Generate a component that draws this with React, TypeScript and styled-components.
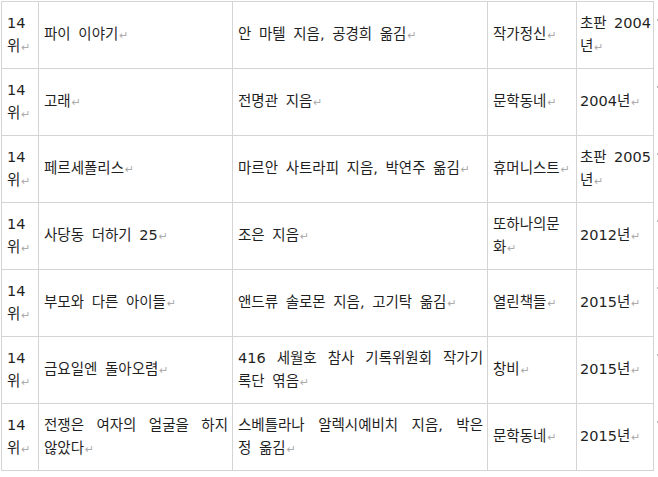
import React from "react";
import styled, { createGlobalStyle } from "styled-components";

const GlobalStyle = createGlobalStyle`
  html, body {
    margin: 0;
    padding: 0;
    background: #ffffff;
  }
  body {
    font-family: "DejaVu Sans", "Noto Sans CJK KR", sans-serif;
    color: #1f1f1f;
  }
`;

const Page = styled.div`
  width: 658px;
  height: 477px;
  overflow: hidden;
  box-sizing: border-box;
  padding: 1px 0 0 1px;
`;

const Table = styled.table`
  border-collapse: collapse;
  table-layout: fixed;
  width: 657px;
`;

const Row = styled.tr`
  height: 67px;
`;

const Cell = styled.td<{ $compact?: boolean }>`
  border: 1px solid #d4d4d4;
  padding: ${(p) => (p.$compact ? "0 2px 0 3px" : "0 4px 0 5px")};
  vertical-align: middle;
  font-size: 14.5px;
  word-spacing: ${(p) => (p.$compact ? "-1.5px" : "3px")};
  --justify-ws: ${(p) => (p.$compact ? "-1.5px" : "0px")};
  overflow: hidden;
`;

const EndCell = styled.td`
  border: none;
  padding: 17px 0 0 3px;
  vertical-align: top;
  overflow: hidden;
`;

const EndMark = styled.span`
  display: block;
  width: 2px;
  height: 2px;
  background: #b8b8b8;
`;

const Line = styled.div<{ $justify?: boolean }>`
  line-height: 23px;
  white-space: ${(p) => (p.$justify ? "normal" : "nowrap")};
  word-spacing: ${(p) => (p.$justify ? "var(--justify-ws)" : "inherit")};
  text-align: ${(p) => (p.$justify ? "justify" : "left")};
  text-align-last: ${(p) => (p.$justify ? "justify" : "auto")};
`;

const ParaMark = styled.span`
  font-family: "DejaVu Sans", sans-serif;
  font-size: 11px;
  color: #ababab;
  margin-left: 1px;
  word-spacing: 0;
`;

type CellText = { lines: string[]; justify?: boolean };

const c = (lines: string[], justify = false): CellText => ({ lines, justify });

const rows: CellText[][] = [
  [c(["14", "위"]), c(["파이 이야기"]), c(["안 마텔 지음, 공경희 옮김"]), c(["작가정신"]), c(["초판 2004", "년"], true)],
  [c(["14", "위"]), c(["고래"]), c(["전명관 지음"]), c(["문학동네"]), c(["2004년"])],
  [c(["14", "위"]), c(["페르세폴리스"]), c(["마르안 사트라피 지음, 박연주 옮김"]), c(["휴머니스트"]), c(["초판 2005", "년"], true)],
  [c(["14", "위"]), c(["사당동 더하기 25"]), c(["조은 지음"]), c(["또하나의문", "화"]), c(["2012년"])],
  [c(["14", "위"]), c(["부모와 다른 아이들"]), c(["앤드류 솔로몬 지음, 고기탁 옮김"]), c(["열린책들"]), c(["2015년"])],
  [c(["14", "위"]), c(["금요일엔 돌아오렴"]), c(["416 세월호 참사 기록위원회 작가기", "록단 엮음"], true), c(["창비"]), c(["2015년"])],
  [c(["14", "위"]), c(["전쟁은 여자의 얼굴을 하지", "않았다"], true), c(["스베틀라나 알렉시예비치 지음, 박은", "정 옮김"], true), c(["문학동네"]), c(["2015년"])],
];

const widths = [37, 194, 255, 89, 77, 5];

export default function App() {
  return (
    <>
      <GlobalStyle />
      <Page>
        <Table>
          <colgroup>
            {widths.map((w, i) => (
              <col key={i} style={{ width: w }} />
            ))}
          </colgroup>
          <tbody>
            {rows.map((row, ri) => (
              <Row key={ri}>
                {row.map((cell, ci) => (
                  <Cell key={ci} $compact={ci === 4}>
                    {cell.lines.map((ln, li) => {
                      const isLast = li === cell.lines.length - 1;
                      return (
                        <Line key={li} $justify={cell.justify && !isLast}>
                          {ln}
                          {isLast && <ParaMark>↵</ParaMark>}
                        </Line>
                      );
                    })}
                  </Cell>
                ))}
                <EndCell>
                  <EndMark />
                </EndCell>
              </Row>
            ))}
          </tbody>
        </Table>
      </Page>
    </>
  );
}
